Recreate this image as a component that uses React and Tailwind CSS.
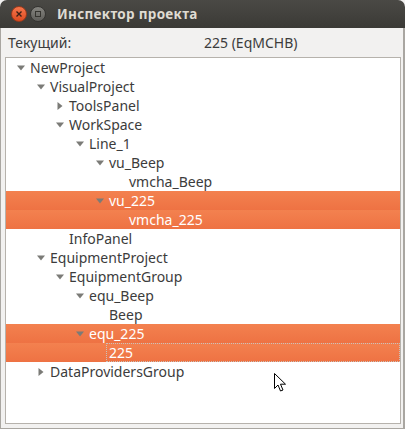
import React from 'react';

const tree = [
  { label: 'NewProject', level: 0, arrow: 'down' },
  { label: 'VisualProject', level: 1, arrow: 'down' },
  { label: 'ToolsPanel', level: 2, arrow: 'right' },
  { label: 'WorkSpace', level: 2, arrow: 'down' },
  { label: 'Line_1', level: 3, arrow: 'down' },
  { label: 'vu_Beep', level: 4, arrow: 'down' },
  { label: 'vmcha_Beep', level: 5 },
  { label: 'vu_225', level: 4, arrow: 'down', selected: true },
  { label: 'vmcha_225', level: 5, selected: true },
  { label: 'InfoPanel', level: 2 },
  { label: 'EquipmentProject', level: 1, arrow: 'down' },
  { label: 'EquipmentGroup', level: 2, arrow: 'down' },
  { label: 'equ_Beep', level: 3, arrow: 'down' },
  { label: 'Beep', level: 4 },
  { label: 'equ_225', level: 3, arrow: 'down', selected: true },
  { label: '225', level: 4, selected: true, focused: true },
  { label: 'DataProvidersGroup', level: 1, arrow: 'right' },
];

const indent = ['pl-[17px]', 'pl-[37px]', 'pl-[56px]', 'pl-[76px]', 'pl-[96px]', 'pl-[116px]'];

const Arrow = ({ dir }) => (
  <svg width="8" height="8" viewBox="0 0 8 8" className="shrink-0">
    {dir === 'down' ? (
      <path d="M0 1.5 L8 1.5 L4 6.5 Z" fill="#7b7b77" />
    ) : (
      <path d="M1.5 0 L6.5 4 L1.5 8 Z" fill="#7b7b77" />
    )}
  </svg>
);

const Row = ({ item }) => (
  <div
    className={`h-[19px] flex items-center ${indent[item.level]} ${
      item.selected ? 'bg-gradient-to-b from-[#f3814f] to-[#ee7243] text-white' : 'text-[#3c3c3c]'
    }`}
  >
    <div className="w-[11px] -ml-[6px] mr-[2px] flex justify-start">
      {item.arrow && <Arrow dir={item.arrow} />}
    </div>
    {item.focused ? (
      <span className="flex-1 h-full flex items-center border border-dotted border-[#c9c2bc] -ml-[3px] pl-[2px]">
        {item.label}
      </span>
    ) : (
      <span>{item.label}</span>
    )}
  </div>
);

const App = () => {
  return (
    <div className="w-[405px] h-[429px] bg-[#f2f1f0] relative overflow-hidden" style={{ fontFamily: '"Noto Sans", "DejaVu Sans", sans-serif' }}>
      <div className="h-[28px] rounded-t-[7px] bg-gradient-to-b from-[#4a4945] to-[#3b3a36] flex items-center px-[11px] gap-[3px]">
        <div className="w-[16px] h-[16px] rounded-full bg-gradient-to-b from-[#f6764b] to-[#dc4a1f] border border-[#9b3a1c] flex items-center justify-center">
          <svg width="6" height="6" viewBox="0 0 6 6">
            <path d="M0.5 0.5 L5.5 5.5 M5.5 0.5 L0.5 5.5" stroke="#3b2016" strokeWidth="1.4" />
          </svg>
        </div>
        <div className="w-[16px] h-[16px] rounded-full bg-gradient-to-b from-[#85847f] to-[#5f5e5a] border border-[#353431] flex items-center justify-center">
          <div className="w-[6px] h-[6px] border border-[#35342f]" />
        </div>
        <span className="ml-[8px] text-[13.5px] font-bold text-[#dfdbd2] tracking-[0.3px]">Инспектор проекта</span>
      </div>

      <div className="h-[401px] border-r-[2px] border-[#a9a6a1] border-l border-b flex flex-col">
        <div className="h-[29px] flex items-center text-[14px] text-[#3c3c3c] pl-[7px]">
          <span className="w-[196px]">Текущий:</span>
          <span>225 (EqMCHB)</span>
        </div>
        <div className="ml-[4px] mr-[2px] h-[367px] bg-white border border-[#b6b2ac] text-[14px]">
          {tree.map((item, i) => (
            <Row key={i} item={item} />
          ))}
        </div>
      </div>

      <svg className="absolute left-[274px] top-[373px]" width="13" height="20" viewBox="0 0 13 20">
        <path d="M0.5 0.5 L0.5 15.5 L4 12 L6.5 18 L9 17 L6.5 11.2 L11.5 11.2 Z" fill="#ffffff" stroke="#000000" strokeWidth="1" strokeLinejoin="round" />
      </svg>
    </div>
  );
};

export default App;
